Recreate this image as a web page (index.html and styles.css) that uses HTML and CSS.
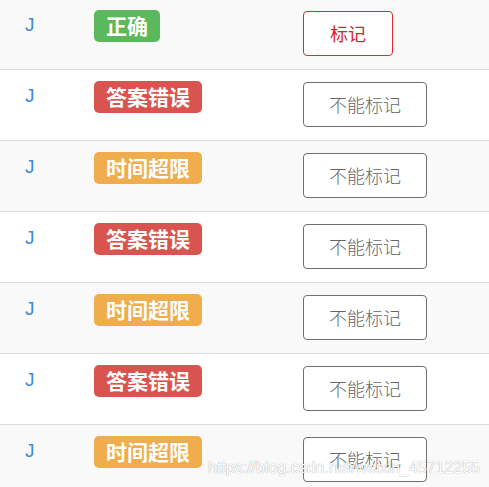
FILE: index.html
```html
<!DOCTYPE html>
<html lang="zh-CN">
<head>
    <meta charset="UTF-8">
    <meta name="viewport" content="width=device-width, initial-scale=1.0">
    <title>Status</title>
    <link rel="stylesheet" href="styles.css">
</head>
<body>
    <div class="page">
        <div class="status-table">
            <div class="row">
                <div class="cell user"><a href="#">J</a></div>
                <div class="cell"><span class="label label-success">正确</span></div>
                <div class="cell"><button class="btn btn-mark">标记</button></div>
            </div>
            <div class="row">
                <div class="cell user"><a href="#">J</a></div>
                <div class="cell"><span class="label label-danger">答案错误</span></div>
                <div class="cell"><button class="btn">不能标记</button></div>
            </div>
            <div class="row">
                <div class="cell user"><a href="#">J</a></div>
                <div class="cell"><span class="label label-warning">时间超限</span></div>
                <div class="cell"><button class="btn">不能标记</button></div>
            </div>
            <div class="row">
                <div class="cell user"><a href="#">J</a></div>
                <div class="cell"><span class="label label-danger">答案错误</span></div>
                <div class="cell"><button class="btn">不能标记</button></div>
            </div>
            <div class="row">
                <div class="cell user"><a href="#">J</a></div>
                <div class="cell"><span class="label label-warning">时间超限</span></div>
                <div class="cell"><button class="btn">不能标记</button></div>
            </div>
            <div class="row">
                <div class="cell user"><a href="#">J</a></div>
                <div class="cell"><span class="label label-danger">答案错误</span></div>
                <div class="cell"><button class="btn">不能标记</button></div>
            </div>
            <div class="row">
                <div class="cell user"><a href="#">J</a></div>
                <div class="cell"><span class="label label-warning">时间超限</span></div>
                <div class="cell"><button class="btn">不能标记</button></div>
            </div>
        </div>

        <!-- faint background watermark -->
        <div class="watermark">
            <span class="wm-word wm-1">HUSTOJ</span>
            <span class="wm-acm wm-2">ACM</span>
            <span class="wm-word wm-3">HUSTOJ</span>
            <span class="wm-acm wm-4">ACM</span>
        </div>

        <div class="csdn-mark">https://blog.csdn.net/weixin_45712255</div>
    </div>
</body>
</html>
```

FILE: styles.css
```css
body {
    margin: 0;
    background: #fff;
    font-family: "Liberation Sans", Arial, "Noto Sans CJK SC", sans-serif;
    color: #333;
    overflow: hidden;
}
.page {
    position: relative;
    height: 487px;
    overflow: hidden;
}
.status-table {
    margin-top: -2px;
}
.row {
    display: grid;
    grid-template-columns: 94px 209px 1fr;
    height: 70px;
    border-top: 1px solid #ddd;
}
.row:nth-child(odd) {
    background-color: #f9f9f9;
}
.cell.user {
    padding: 16px 0 0 25px;
    font-size: 19px;
    line-height: 19px;
}
.cell.user a {
    color: #3f8bd4;
    text-decoration: none;
}
.label {
    display: inline-block;
    margin-top: 11px;
    padding: 5px 12px 6px;
    font-family: "Noto Sans CJK SC", sans-serif;
    font-size: 21px;
    font-weight: bold;
    line-height: 21px;
    color: #fff;
    border-radius: 5px;
}
.label-success {
    background-color: #5cb85c;
}
.label-danger {
    background-color: #d9534f;
}
.label-warning {
    background-color: #f0ad4e;
}
.btn {
    margin-top: 12px;
    padding: 10px 25px;
    font-family: "Noto Sans CJK SC", sans-serif;
    font-size: 18px;
    font-weight: 300;
    line-height: 23px;
    color: #666;
    background: #fff;
    border: 1px solid #707070;
    border-radius: 4px;
    cursor: pointer;
}
.btn-mark {
    padding: 10px 26px;
    color: #d62630;
    font-weight: normal;
    border-color: #e5262e;
}
.watermark {
    position: absolute;
    inset: 0;
    pointer-events: none;
    color: rgba(0, 0, 0, 0.02);
    font-size: 25px;
}
.wm-word,
.wm-acm {
    position: absolute;
    white-space: nowrap;
}
.wm-acm {
    font-size: 40px;
    transform: rotate(-45deg);
    transform-origin: left bottom;
}
.wm-1 { left: 20px; top: 118px; }
.wm-3 { left: 290px; top: 118px; }
.wm-2 { left: 150px; top: 95px; }
.wm-4 { left: 420px; top: 95px; }
.csdn-mark {
    position: absolute;
    left: 208px;
    top: 460px;
    font-size: 16px;
    line-height: 16px;
    color: #fff;
    text-shadow: 0 0 1px rgba(0, 0, 0, 0.45);
    white-space: nowrap;
}
```
